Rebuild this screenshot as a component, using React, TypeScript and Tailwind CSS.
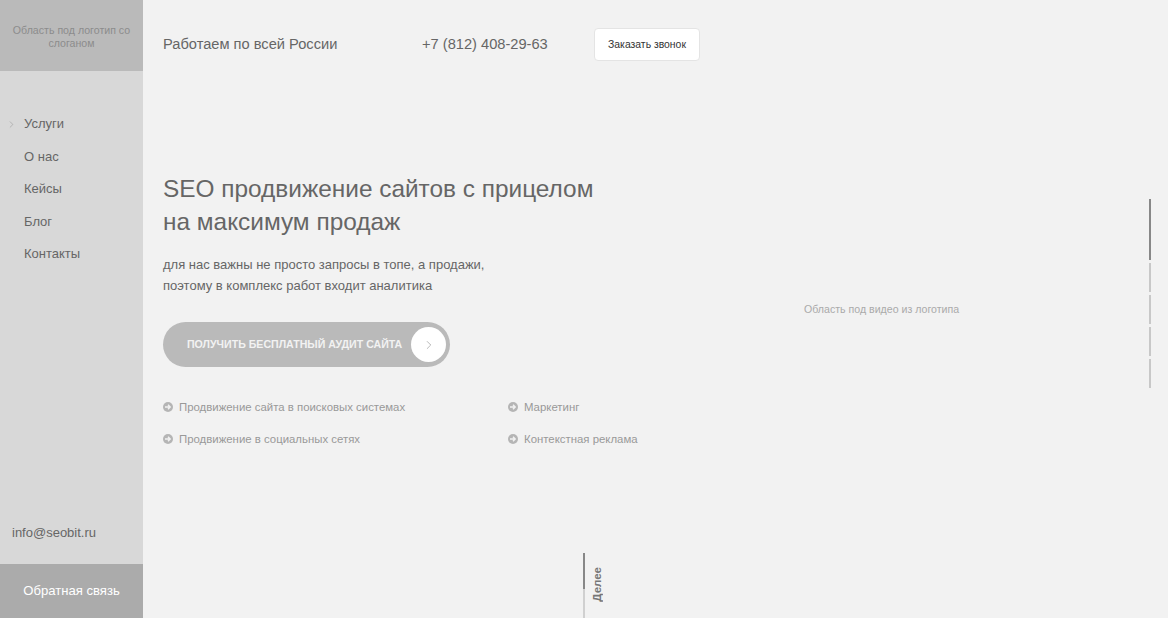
import React from "react";
import { ChevronRight } from "lucide-react";

const menu = ["Услуги", "О нас", "Кейсы", "Блог", "Контакты"];

const BulletIcon = () => (
  <svg width="10" height="10" viewBox="0 0 10 10" className="shrink-0">
    <circle cx="5" cy="5" r="5" fill="#b5b5b5" />
    <path d="M2 5h5M5 2.8 7.2 5 5 7.2" fill="none" stroke="#f2f2f2" strokeWidth="1.4" />
  </svg>
);

const Bullet = ({ text }: { text: string }) => (
  <div className="flex items-center gap-[6px]">
    <BulletIcon />
    <span className="text-[11.4px] leading-[14px] text-[#999]">{text}</span>
  </div>
);

const App = () => {
  return (
    <div className="relative flex h-[618px] w-[1168px] overflow-hidden bg-[#f2f2f2] font-['Liberation_Sans',Arial,sans-serif]">
      <aside className="flex w-[143px] shrink-0 flex-col bg-[#d8d8d8]">
        <div className="h-[71px] bg-[#bababa] px-2 pt-6 text-center text-[10.6px] leading-[12.5px] text-[#8c8c8c]">
          Область под логотип со слоганом
        </div>
        <nav className="mt-[45px] flex flex-col gap-[16.5px]">
          {menu.map((item, i) => (
            <div key={item} className="relative pl-6 text-[13px] leading-4 text-[#666]">
              {i === 0 && (
                <ChevronRight size={11} strokeWidth={1} className="absolute left-[6px] top-[3px] text-[#888]" />
              )}
              {item}
            </div>
          ))}
        </nav>
        <div className="mt-auto pb-[23px] pl-3 text-[13px] leading-4 text-[#666]">info@seobit.ru</div>
        <div className="flex h-[54px] items-center justify-center bg-[#ababab] text-[13.1px] text-white">
          Обратная связь
        </div>
      </aside>

      <main className="min-w-0 flex-1 pl-5">
        <header className="flex items-center pt-7">
          <div className="w-[259px] text-[14.65px] leading-[33px] text-[#666]">Работаем по всей России</div>
          <div className="w-[172px] text-[14.65px] leading-[33px] text-[#666]">+7 (812) 408-29-63</div>
          <button className="h-[33px] w-[106px] rounded-sm border border-[#e4e4e4] bg-white text-[10.4px] text-[#333]">
            Заказать звонок
          </button>
        </header>

        <h1 className="mt-[111px] text-[24.4px] leading-[33px] font-normal text-[#666]">
          SEO продвижение сайтов с прицелом
          <br />
          на максимум продаж
        </h1>
        <p className="mt-[16px] text-[13px] leading-[21px] text-[#666]">
          для нас важны не просто запросы в топе, а продажи,
          <br />
          поэтому в комплекс работ входит аналитика
        </p>

        <button className="mt-[26px] flex h-[45px] w-[287px] items-center rounded-full bg-[#bababa] pl-6 pr-1">
          <span className="text-[10.6px] font-bold text-[#f2f2f2]">ПОЛУЧИТЬ БЕСПЛАТНЫЙ АУДИТ САЙТА</span>
          <span className="ml-auto flex h-[35px] w-[35px] items-center justify-center rounded-full bg-white">
            <ChevronRight size={14} strokeWidth={1} className="text-[#888]" />
          </span>
        </button>

        <div className="mt-[33px] grid w-[500px] grid-cols-[345px_1fr] gap-y-[18px]">
          <Bullet text="Продвижение сайта в поисковых системах" />
          <Bullet text="Маркетинг" />
          <Bullet text="Продвижение в социальных сетях" />
          <Bullet text="Контекстная реклама" />
        </div>
      </main>

      <div className="absolute left-[804px] top-[303px] text-[10.6px] leading-3 text-[#aaa]">
        Область под видео из логотипа
      </div>

      <div className="absolute left-[1149px] top-[199px] flex flex-col gap-[3px]">
        <div className="h-[61px] w-0.5 bg-[#888]" />
        <div className="h-[29px] w-0.5 bg-[#c8c8c8]" />
        <div className="h-[29px] w-0.5 bg-[#c8c8c8]" />
        <div className="h-[29px] w-0.5 bg-[#c8c8c8]" />
        <div className="h-[29px] w-0.5 bg-[#c8c8c8]" />
      </div>

      <div className="absolute left-[583px] top-[553px] flex flex-col">
        <div className="h-[36px] w-0.5 bg-[#888]" />
        <div className="h-[29px] w-0.5 bg-[#d0d0d0]" />
      </div>
      <div className="absolute left-[591px] top-[567px] rotate-180 text-[11.5px] leading-3 font-bold text-[#777] [writing-mode:vertical-rl]">
        Делее
      </div>
    </div>
  );
};

export default App;
